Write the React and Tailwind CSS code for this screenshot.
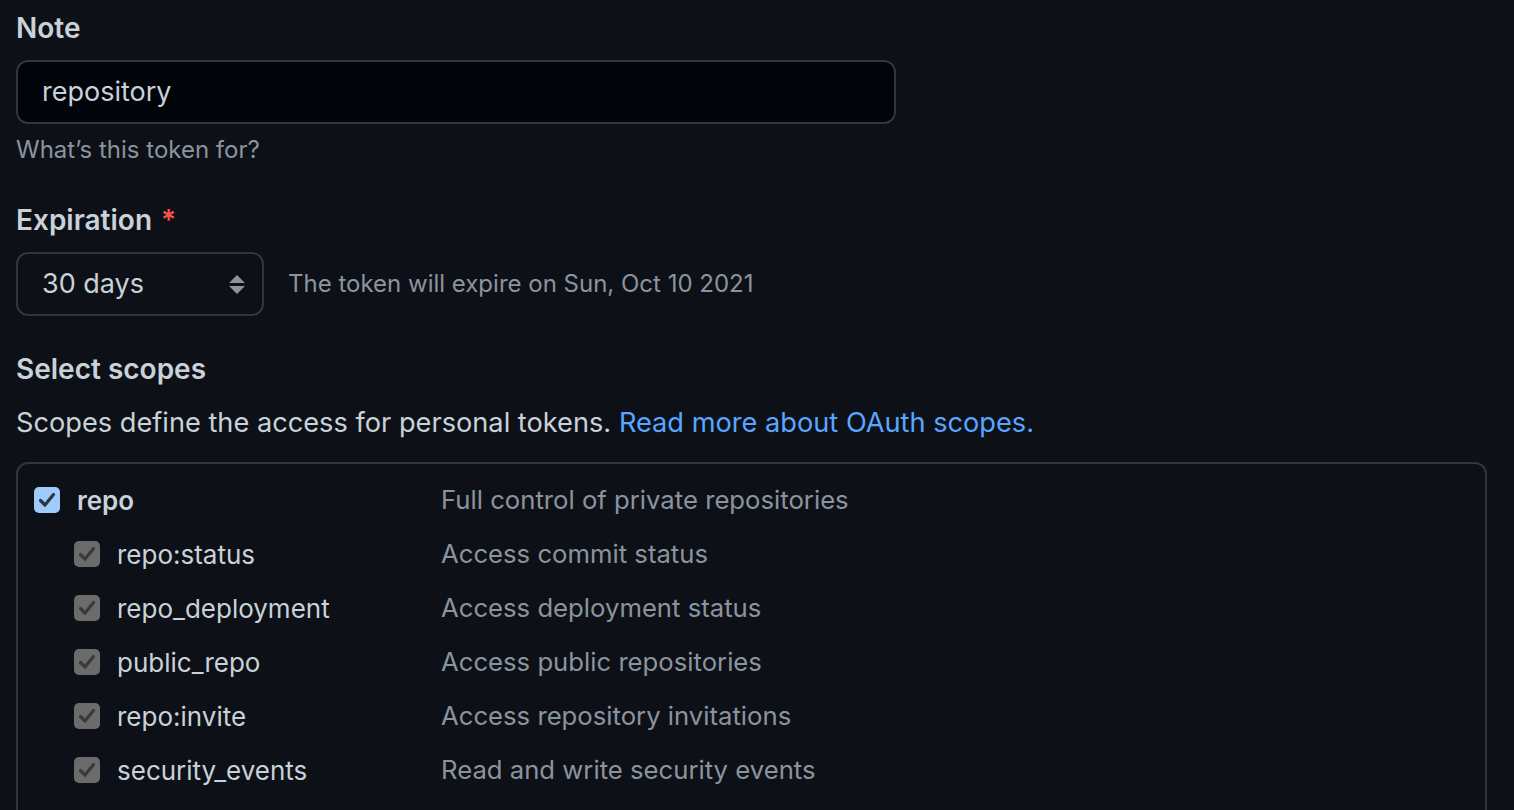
import React from 'react';

const scopes = [
  { name: 'repo', desc: 'Full control of private repositories', parent: true },
  { name: 'repo:status', desc: 'Access commit status' },
  { name: 'repo_deployment', desc: 'Access deployment status' },
  { name: 'public_repo', desc: 'Access public repositories' },
  { name: 'repo:invite', desc: 'Access repository invitations' },
  { name: 'security_events', desc: 'Read and write security events' },
];

const Check = ({ parent }) => (
  <div
    className={`w-[26px] h-[26px] rounded-[5px] flex items-center justify-center shrink-0 ${
      parent ? 'bg-[#9fcbfb]' : 'bg-[#6b6b6b]'
    }`}
  >
    <svg width="20" height="20" viewBox="0 0 20 20">
      <path
        d="M3.5 10.5 L8 15 L16.5 4.5"
        fill="none"
        stroke={parent ? '#2f3540' : '#3a3a3a'}
        strokeWidth="3.2"
        strokeLinecap="round"
        strokeLinejoin="round"
      />
    </svg>
  </div>
);

export default function App() {
  return (
    <div
      className="h-[810px] bg-[#0d1117] text-[#c9d1d9] pl-[16px] pt-[8px] overflow-hidden"
      style={{ fontFamily: 'Inter, "Noto Sans", sans-serif' }}
    >
      {/* Note */}
      <div className="text-[28px] leading-[40px] font-semibold">Note</div>
      <div className="mt-[12px] w-[880px] h-[64px] rounded-[12px] border-2 border-[#30363d] bg-[#010409] flex items-center pl-[24px] text-[27px]">
        repository
      </div>
      <div className="mt-[8px] text-[24px] leading-[36px] text-[#8b949e]">What’s this token for?</div>

      {/* Expiration */}
      <div className="mt-[32px] text-[28px] leading-[40px] font-semibold flex items-center">
        Expiration
        <span className="text-[#f85149] ml-[9px]">*</span>
      </div>
      <div className="mt-[12px] flex items-center">
        <div className="w-[248px] h-[64px] rounded-[12px] border-2 border-[#30363d] flex items-center justify-between pl-[24px] pr-[16px] text-[27px]">
          <span>30 days</span>
          <svg width="18" height="22" viewBox="0 0 18 22">
            <path d="M9 2 L17 10 L1 10 Z" fill="#8b949e" />
            <path d="M1 13 L17 13 L9 21 Z" fill="#8b949e" />
          </svg>
        </div>
        <div className="ml-[24px] text-[24px] text-[#8b949e]">The token will expire on Sun, Oct 10 2021</div>
      </div>

      {/* Select scopes */}
      <div className="mt-[33px] text-[28px] leading-[40px] font-semibold">Select scopes</div>
      <div className="mt-[14px] text-[27.2px] leading-[40px]">
        Scopes define the access for personal tokens.{' '}
        <a className="text-[#58a6ff]">Read more about OAuth scopes.</a>
      </div>

      <div className="mt-[19px] w-[1471px] h-[400px] rounded-t-[12px] border-2 border-[#30363d] pt-[9px] pl-[16px]">
        {scopes.map((s) => (
          <div key={s.name} className="h-[54px] flex items-center">
            <div className={`w-[407px] flex items-center gap-[17px] ${s.parent ? '' : 'pl-[40px]'}`}>
              <Check parent={s.parent} />
              <span className={`text-[26px] ${s.parent ? 'font-semibold' : ''}`}>{s.name}</span>
            </div>
            <div className="text-[25.7px] text-[#8b949e]">{s.desc}</div>
          </div>
        ))}
      </div>
    </div>
  );
}
